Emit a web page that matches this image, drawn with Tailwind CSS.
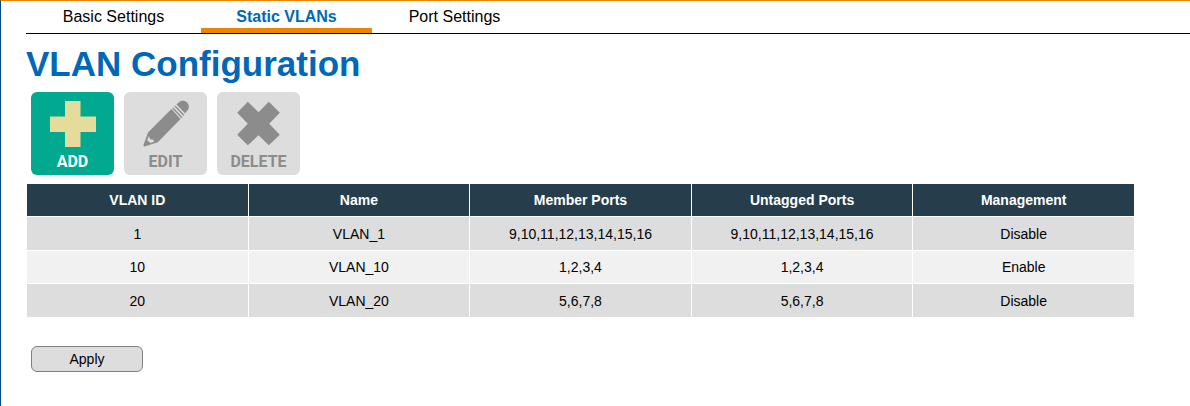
<!DOCTYPE html>
<html lang="en">
<head>
    <meta charset="UTF-8">
    <meta name="viewport" content="width=device-width, initial-scale=1.0">
    <title>VLAN Configuration</title>
    <script src="https://cdn.jsdelivr.net/npm/@tailwindcss/browser@4"></script>
</head>
<body class="bg-white text-black font-['Liberation_Sans',Arial,sans-serif]">
    <div class="min-h-screen border-t border-l border-t-[#f08300] border-l-[#004b85] pl-[25px]">
        <!-- Tabs -->
        <nav class="flex h-[33px] border-b border-black text-base leading-8">
            <a href="#basic" class="px-9 w-[175px] text-center whitespace-nowrap">Basic Settings</a>
            <a href="#static" aria-current="page" class="px-9 h-8 w-[171px] flex justify-center whitespace-nowrap border-b-5 border-[#f08300] font-bold text-[#0068b7]">Static VLANs</a>
            <a href="#ports" class="px-9 w-[165px] text-center whitespace-nowrap">Port Settings</a>
        </nav>

        <h1 class="mt-2 text-[35px] leading-[44px] font-bold text-[#0068b7]">VLAN Configuration</h1>

        <!-- Toolbar -->
        <div class="mt-1.5 ml-[5px] flex gap-2.5">
            <button type="button" class="size-[83px] rounded-md bg-[#00a98f] text-white flex flex-col items-center">
                <svg class="mt-2 size-12 shrink-0" viewBox="0 0 48 48" fill="#e5db9a" aria-hidden="true">
                    <path d="M16 1h15.500v15.500H47V32H31.500v15H16V32H1V16.500h15z"/>
                </svg>
                <span class="mt-1 font-[Roboto,sans-serif] text-base leading-5 font-bold">ADD</span>
            </button>
            <button type="button" disabled class="size-[83px] rounded-md bg-[#ddd] text-[#8c8c8c] flex flex-col items-center">
                <svg class="mt-2 size-12 shrink-0" viewBox="0 0 48 48" fill="#8c8c8c" aria-hidden="true">
                    <path d="M34.500 4.500l2.500-2.300c3-2.200 6-1.700 8 .300s2.700 5 .500 8L43 13.300z"/>
                    <path fill-rule="evenodd" d="M29.500 9L6 32.500 1.300 45.500l1.200 1 13.300-4.200L38.500 19zM6.800 36l1.400 3.200 3.300.600.500 2-3.500 1.200-3.300-2.800z"/>
                    <path d="M30.800 8l9.200 9.700M33 6l8.800 9.200" fill="none" stroke="#8c8c8c" stroke-width="1.300"/>
                </svg>
                <span class="mt-1 font-[Roboto,sans-serif] text-base leading-5 font-bold">EDIT</span>
            </button>
            <button type="button" disabled class="size-[83px] rounded-md bg-[#ddd] text-[#8c8c8c] flex flex-col items-center">
                <svg class="mt-2 size-12 shrink-0" viewBox="0 0 48 48" fill="#8c8c8c" aria-hidden="true">
                    <path d="M12.800 1.700l10.700 10.600L33.800 1.700l11 11-10.600 11 10.600 11-11 10.600-10.300-10-10.700 10-10.600-10.600 10.600-11-10.600-11z"/>
                </svg>
                <span class="mt-1 font-[Roboto,sans-serif] text-base leading-5 font-bold">DELETE</span>
            </button>
        </div>

        <!-- VLAN list -->
        <div class="mt-2 mr-[55px]">
            <table class="w-full table-fixed border-separate border-spacing-px text-center text-sm">
                <thead>
                    <tr class="h-8 bg-[#263e4b] text-white">
                        <th>VLAN ID</th>
                        <th>Name</th>
                        <th>Member Ports</th>
                        <th>Untagged Ports</th>
                        <th>Management</th>
                    </tr>
                </thead>
                <tbody>
                    <tr class="h-[33px] bg-[#ddd]">
                        <td>1</td>
                        <td>VLAN_1</td>
                        <td>9,10,11,12,13,14,15,16</td>
                        <td>9,10,11,12,13,14,15,16</td>
                        <td>Disable</td>
                    </tr>
                    <tr class="h-8 bg-[#f1f1f1]">
                        <td>10</td>
                        <td>VLAN_10</td>
                        <td>1,2,3,4</td>
                        <td>1,2,3,4</td>
                        <td>Enable</td>
                    </tr>
                    <tr class="h-[33px] bg-[#ddd]">
                        <td>20</td>
                        <td>VLAN_20</td>
                        <td>5,6,7,8</td>
                        <td>5,6,7,8</td>
                        <td>Disable</td>
                    </tr>
                </tbody>
            </table>
        </div>

        <button type="button" class="mt-7 ml-[5px] h-[26px] w-28 rounded-md border border-[#808080] bg-[#ddd] text-sm">Apply</button>
    </div>
</body>
</html>
